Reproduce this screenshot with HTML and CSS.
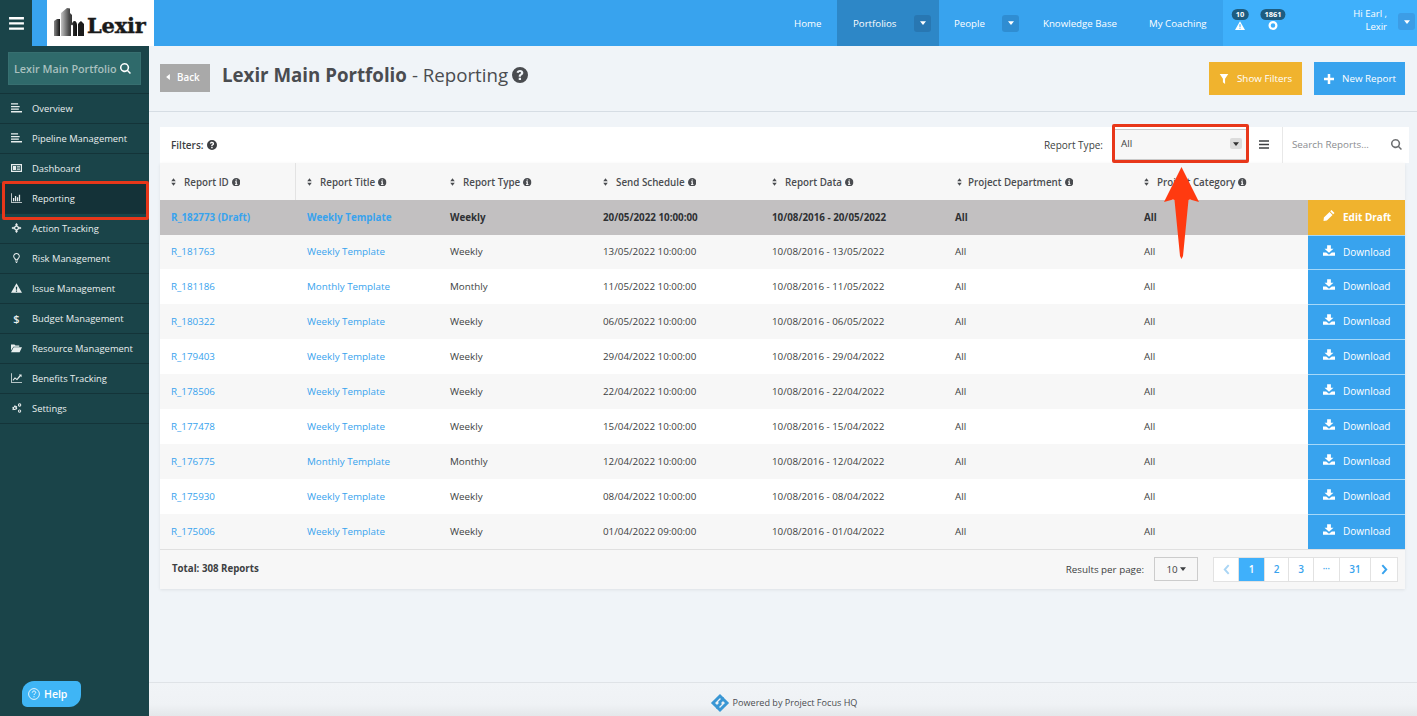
FILE: index.html
```html
<!DOCTYPE html>
<html lang="en">
<head>
<meta charset="utf-8">
<title>Lexir Main Portfolio - Reporting</title>
<link rel="stylesheet" href="styles.css">
</head>
<body>
<svg class="defs" width="0" height="0" aria-hidden="true">
  <symbol id="i-bars" viewBox="0 0 16 14"><path d="M0 0h16v2.600H0zM0 5.600h16v2.600H0zM0 11.200h16v2.600H0z"/></symbol>
  <symbol id="i-list" viewBox="0 0 14 12"><path d="M0 0h9v1.700H0zM0 3.300h11v1.700H0zM0 6.600h10v1.700H0zM0 9.900h14v1.700H0z"/></symbol>
  <symbol id="i-dash" viewBox="0 0 14 12"><path fill-rule="evenodd" d="M0 1h14v10H0zM1.500 2.500v7h11v-7zM2.500 3.500h4v5h-4zM7.500 3.500h4v1h-4zM7.500 5.500h4v1h-4zM7.500 7.500h4v1h-4z"/></symbol>
  <symbol id="i-chart" viewBox="0 0 14 12"><path d="M0 0h1v11h13v1H0zM2.500 6h1.600v4H2.500zM5 3.500h1.600V10H5zM7.500 5h1.600v5H7.500zM10 2h1.600v8H10z"/></symbol>
  <symbol id="i-target" viewBox="0 0 14 14"><path fill-rule="evenodd" d="M7 0l2.200 2.500H8.100v1A3.600 3.600 0 0 1 10.500 5.900h1V4.800L14 7l-2.500 2.200V8.100h-1A3.600 3.600 0 0 1 8.100 10.500v1h1.100L7 14l-2.200-2.500h1.100v-1A3.600 3.600 0 0 1 3.500 8.100h-1v1.100L0 7l2.500-2.200v1.100h1A3.600 3.600 0 0 1 5.900 3.500v-1H4.800zM7 5.300a1.700 1.700 0 1 0 0 3.400 1.700 1.700 0 0 0 0-3.400z"/></symbol>
  <symbol id="i-bulb" viewBox="0 0 10 14"><path fill-rule="evenodd" d="M5 0a4.500 4.500 0 0 1 3 7.900c-.6.600-.8 1.300-.9 2.100H2.900c-.1-.8-.3-1.500-.9-2.100A4.500 4.500 0 0 1 5 0zm0 1.300A3.200 3.200 0 0 0 3 7c.6.600 1 1.100 1.100 1.800h1.800C6 8.100 6.400 7.600 7 7a3.200 3.200 0 0 0-2-5.700zM3 10.800h4v1H3zM3.700 12.500h2.600L5.600 14H4.400z"/></symbol>
  <symbol id="i-warn" viewBox="0 0 16 14"><path fill-rule="evenodd" d="M8 0l8 14H0zM7 5l.2 4.500h1.600L9 5zM7.100 10.500v1.800h1.800v-1.800z"/></symbol>
  <symbol id="i-folder" viewBox="0 0 16 12"><path d="M0 1h5l1.500 1.500H12V4H3.500L0 9.500zM3.900 5H16l-3.500 7H0z"/></symbol>
  <symbol id="i-line" viewBox="0 0 14 12"><path d="M0 0h1v11h13v1H0zM2 8.500l3-3.500 2.500 2L11 2.500 10 1.500h3.500V5l-1.200-1.200L7.700 9 5.200 7l-2.400 2.500z"/></symbol>
  <symbol id="i-cogs" viewBox="0 0 16 14"><path fill-rule="evenodd" d="M5.500 3l1 .2.400 1.300 1.300-.4 1 1.500-.9 1 .9 1-1 1.500-1.300-.4-.4 1.300h-2L4.100 9.700l-1.300.4-1-1.500.9-1-.9-1 1-1.500 1.300.4.400-1.300zm0 2.800a1.300 1.300 0 1 0 0 2.600 1.300 1.300 0 0 0 0-2.600zM12.500 0a2 2 0 1 1 0 5 2 2 0 0 1 0-5zm0 1.500a1 1 0 1 0 0 2 1 1 0 0 0 0-2zM12.500 9a2.300 2.300 0 1 1 0 4.800 2.300 2.300 0 0 1 0-4.800zm0 1.400a1 1 0 1 0 0 2 1 1 0 0 0 0-2z"/></symbol>
  <symbol id="i-search" viewBox="0 0 14 14"><path fill-rule="evenodd" d="M5.800 0a5.800 5.800 0 0 1 4.700 9.200l3.500 3.500-1.400 1.300-3.400-3.500A5.800 5.800 0 1 1 5.800 0zm0 1.900a3.900 3.900 0 1 0 0 7.800 3.900 3.900 0 0 0 0-7.800z"/></symbol>
  <symbol id="i-help" viewBox="0 0 14 14"><path fill-rule="evenodd" d="M7 0a7 7 0 1 1 0 14A7 7 0 0 1 7 0zM7 2.600c-1.700 0-2.800.9-3 2.300l1.800.4c.1-.7.500-1 1.100-1 .6 0 1 .3 1 .8 0 .4-.3.700-.9 1.100-.8.500-1.100 1-1.100 1.800v.5h1.900v-.3c0-.4.200-.6.700-.9.900-.6 1.400-1.200 1.400-2.200 0-1.500-1.200-2.500-2.900-2.500zM5.900 9.500v1.900h2v-1.900z"/></symbol>
  <symbol id="i-info" viewBox="0 0 14 14"><path fill-rule="evenodd" d="M7 0a7 7 0 1 1 0 14A7 7 0 0 1 7 0zM5.900 2.300v2h2.200v-2zM5 5.500v1.400h1v3H5v1.500h4V9.900H8V5.500z"/></symbol>
  <symbol id="i-sort" viewBox="0 0 8 12"><path d="M4 0l3.600 4.800H.4zM4 12L.4 7.200h7.200z"/></symbol>
  <symbol id="i-download" viewBox="0 0 16 14"><path d="M5.500 0h5v4.500H14L8 10 2 4.500h3.500zM0 9.500h4.300L8 12.500l3.700-3H16V14H0z"/></symbol>
  <symbol id="i-pencil" viewBox="0 0 14 14"><path d="M10.200 0L14 3.800l-1.700 1.700-3.800-3.800zM7.700 2.500l3.800 3.800-7.200 7.200L0 14l.5-4.300z"/></symbol>
  <symbol id="i-filter" viewBox="0 0 12 14"><path d="M0 0h12L7.500 6.500V14l-3-2.500v-5z"/></symbol>
  <symbol id="i-plus" viewBox="0 0 12 12"><path d="M4.500 0h3v4.500H12v3H7.500V12h-3V7.500H0v-3h4.500z"/></symbol>
  <symbol id="i-caret" viewBox="0 0 8 5"><path d="M0 0h8L4 5z"/></symbol>
  <symbol id="i-left" viewBox="0 0 5 8"><path d="M5 0v8L0 4z"/></symbol>
  <symbol id="i-circle" viewBox="0 0 14 14"><path fill-rule="evenodd" d="M7 0a7 7 0 1 1 0 14A7 7 0 0 1 7 0zm0 3.500a3.500 3.500 0 1 0 0 7 3.500 3.500 0 0 0 0-7z"/></symbol>
  <symbol id="i-qmark" viewBox="0 0 14 14"><circle cx="7" cy="7" r="6.300" fill="none" stroke="currentColor" stroke-width="1"/><path d="M5 5.400c.1-1.200.9-1.900 2-1.900s2 .7 2 1.700c0 1.500-2 1.500-2 3" fill="none" stroke="currentColor" stroke-width="1.100"/><path d="M6.400 9.500h1.200v1.300H6.400z" fill="currentColor"/></symbol>
</svg>

<header class="topbar">
  <button class="menu-toggle" type="button" aria-label="Menu"><svg class="ic-burger"><use href="#i-bars"/></svg></button>
  <div class="logo">
    <svg class="logo-mark" viewBox="0 0 30 28" aria-hidden="true">
      <defs>
        <linearGradient id="tower" x1="0" x2="1" y1="0" y2="0"><stop offset="0" stop-color="#c4c4c4"/><stop offset=".5" stop-color="#4a4a4a"/><stop offset="1" stop-color="#0e0e0e"/></linearGradient>
        <linearGradient id="wing" x1="0" x2="1" y1="0" y2="0"><stop offset="0" stop-color="#8a8a8a"/><stop offset="1" stop-color="#141414"/></linearGradient>
      </defs>
      <path fill="url(#wing)" d="M0 13l3-2h3v17H0z"/>
      <path fill="url(#tower)" d="M7 5l6-5 3 .5V5l2 2v9c0-1 1-3 2.500-3S23 15 23 17v11h-4V18c0-1-1-1.500-1.500-1s-.5.500-.5 1v10H7z"/>
      <path fill="#1c1c1c" d="M24 28V16c1-1.500 2-2.500 3-3l3 3v12z"/>
    </svg>
    <span class="logo-word">Lexir</span>
  </div>
  <nav class="mainnav">
    <a class="navitem navitem-home">Home</a>
    <a class="navitem navitem-active">Portfolios<span class="navcaret navcaret-dark"><svg class="ic-caret"><use href="#i-caret"/></svg></span></a>
    <a class="navitem navitem-people">People<span class="navcaret"><svg class="ic-caret"><use href="#i-caret"/></svg></span></a>
    <a class="navitem navitem-kb">Knowledge Base</a>
    <a class="navitem navitem-coach">My Coaching</a>
  </nav>
  <div class="userarea">
    <div class="alert"><svg class="ic-alert"><use href="#i-warn"/></svg><span class="badge">10</span></div>
    <div class="alert alert-second"><svg class="ic-alert"><use href="#i-circle"/></svg><span class="badge">1861</span></div>
    <div class="username">Hi Earl ,<br>Lexir</div>
    <span class="navcaret usercaret"><svg class="ic-caret"><use href="#i-caret"/></svg></span>
  </div>
</header>

<div class="layout">
  <aside class="sidebar">
    <div class="sidesearch-wrap">
      <div class="sidesearch"><span>Lexir Main Portfolio</span><svg class="ic-sidesearch"><use href="#i-search"/></svg></div>
    </div>
    <ul class="sidemenu">
      <li class="sideitem"><svg class="ic-side"><use href="#i-list"/></svg>Overview</li>
      <li class="sideitem"><svg class="ic-side"><use href="#i-list"/></svg>Pipeline Management</li>
      <li class="sideitem"><svg class="ic-side"><use href="#i-dash"/></svg>Dashboard</li>
      <li class="sideitem sideitem-active"><svg class="ic-side"><use href="#i-chart"/></svg>Reporting</li>
      <li class="sideitem"><svg class="ic-side"><use href="#i-target"/></svg>Action Tracking</li>
      <li class="sideitem"><svg class="ic-side"><use href="#i-bulb"/></svg>Risk Management</li>
      <li class="sideitem"><svg class="ic-side"><use href="#i-warn"/></svg>Issue Management</li>
      <li class="sideitem"><span class="ic-dollar">$</span>Budget Management</li>
      <li class="sideitem"><svg class="ic-side"><use href="#i-folder"/></svg>Resource Management</li>
      <li class="sideitem"><svg class="ic-side"><use href="#i-line"/></svg>Benefits Tracking</li>
      <li class="sideitem"><svg class="ic-side"><use href="#i-cogs"/></svg>Settings</li>
    </ul>
  </aside>

  <main class="content">
    <div class="pagehead">
      <a class="backbtn"><svg class="ic-left"><use href="#i-left"/></svg>Back</a>
      <h1 class="pagetitle"><b>Lexir Main Portfolio</b> - Reporting<svg class="ic-title"><use href="#i-help"/></svg></h1>
      <div class="pageactions">
        <a class="actbtn actbtn-yellow"><svg class="ic-act"><use href="#i-filter"/></svg>Show Filters</a>
        <a class="actbtn actbtn-blue"><svg class="ic-act"><use href="#i-plus"/></svg>New Report</a>
      </div>
    </div>

    <section class="panel">
      <div class="filterbar">
        <span class="filterlabel">Filters:<svg class="ic-filterhelp"><use href="#i-help"/></svg></span>
        <span class="typelabel">Report Type:</span>
        <div class="typeselect"><span>All</span><span class="selectcaret"><svg class="ic-caret"><use href="#i-caret"/></svg></span></div>
        <svg class="ic-listview"><use href="#i-bars"/></svg>
        <div class="searchbox"><span>Search Reports...</span><svg class="ic-search"><use href="#i-search"/></svg></div>
      </div>

      <div class="table">
        <div class="row row-head">
          <div class="cell hcell hcell-first"><svg class="ic-sort"><use href="#i-sort"/></svg>Report ID<svg class="ic-info"><use href="#i-info"/></svg></div>
          <div class="cell hcell"><svg class="ic-sort"><use href="#i-sort"/></svg>Report Title<svg class="ic-info"><use href="#i-info"/></svg></div>
          <div class="cell hcell"><svg class="ic-sort"><use href="#i-sort"/></svg>Report Type<svg class="ic-info"><use href="#i-info"/></svg></div>
          <div class="cell hcell"><svg class="ic-sort"><use href="#i-sort"/></svg>Send Schedule<svg class="ic-info"><use href="#i-info"/></svg></div>
          <div class="cell hcell"><svg class="ic-sort"><use href="#i-sort"/></svg>Report Data<svg class="ic-info"><use href="#i-info"/></svg></div>
          <div class="cell hcell hcell-dept"><svg class="ic-sort"><use href="#i-sort"/></svg>Project Department<svg class="ic-info"><use href="#i-info"/></svg></div>
          <div class="cell hcell"><svg class="ic-sort"><use href="#i-sort"/></svg>Project Category<svg class="ic-info"><use href="#i-info"/></svg></div>
          <div class="cell hcell"></div>
        </div>

        <div class="row row-draft">
          <div class="cell"><a class="link">R_182773 (Draft)</a></div>
          <div class="cell"><a class="link">Weekly Template</a></div>
          <div class="cell">Weekly</div>
          <div class="cell">20/05/2022 10:00:00</div>
          <div class="cell">10/08/2016 - 20/05/2022</div>
          <div class="cell">All</div>
          <div class="cell">All</div>
          <a class="rowbtn rowbtn-edit"><svg class="ic-rowbtn"><use href="#i-pencil"/></svg>Edit Draft</a>
        </div>

        <div class="row row-short">
          <div class="cell"><a class="link">R_181763</a></div>
          <div class="cell"><a class="link">Weekly Template</a></div>
          <div class="cell">Weekly</div>
          <div class="cell">13/05/2022 10:00:00</div>
          <div class="cell">10/08/2016 - 13/05/2022</div>
          <div class="cell">All</div>
          <div class="cell">All</div>
          <a class="rowbtn"><svg class="ic-rowbtn"><use href="#i-download"/></svg>Download</a>
        </div>
        <div class="row">
          <div class="cell"><a class="link">R_181186</a></div>
          <div class="cell"><a class="link">Monthly Template</a></div>
          <div class="cell">Monthly</div>
          <div class="cell">11/05/2022 10:00:00</div>
          <div class="cell">10/08/2016 - 11/05/2022</div>
          <div class="cell">All</div>
          <div class="cell">All</div>
          <a class="rowbtn"><svg class="ic-rowbtn"><use href="#i-download"/></svg>Download</a>
        </div>
        <div class="row">
          <div class="cell"><a class="link">R_180322</a></div>
          <div class="cell"><a class="link">Weekly Template</a></div>
          <div class="cell">Weekly</div>
          <div class="cell">06/05/2022 10:00:00</div>
          <div class="cell">10/08/2016 - 06/05/2022</div>
          <div class="cell">All</div>
          <div class="cell">All</div>
          <a class="rowbtn"><svg class="ic-rowbtn"><use href="#i-download"/></svg>Download</a>
        </div>
        <div class="row">
          <div class="cell"><a class="link">R_179403</a></div>
          <div class="cell"><a class="link">Weekly Template</a></div>
          <div class="cell">Weekly</div>
          <div class="cell">29/04/2022 10:00:00</div>
          <div class="cell">10/08/2016 - 29/04/2022</div>
          <div class="cell">All</div>
          <div class="cell">All</div>
          <a class="rowbtn"><svg class="ic-rowbtn"><use href="#i-download"/></svg>Download</a>
        </div>
        <div class="row">
          <div class="cell"><a class="link">R_178506</a></div>
          <div class="cell"><a class="link">Weekly Template</a></div>
          <div class="cell">Weekly</div>
          <div class="cell">22/04/2022 10:00:00</div>
          <div class="cell">10/08/2016 - 22/04/2022</div>
          <div class="cell">All</div>
          <div class="cell">All</div>
          <a class="rowbtn"><svg class="ic-rowbtn"><use href="#i-download"/></svg>Download</a>
        </div>
        <div class="row">
          <div class="cell"><a class="link">R_177478</a></div>
          <div class="cell"><a class="link">Weekly Template</a></div>
          <div class="cell">Weekly</div>
          <div class="cell">15/04/2022 10:00:00</div>
          <div class="cell">10/08/2016 - 15/04/2022</div>
          <div class="cell">All</div>
          <div class="cell">All</div>
          <a class="rowbtn"><svg class="ic-rowbtn"><use href="#i-download"/></svg>Download</a>
        </div>
        <div class="row">
          <div class="cell"><a class="link">R_176775</a></div>
          <div class="cell"><a class="link">Monthly Template</a></div>
          <div class="cell">Monthly</div>
          <div class="cell">12/04/2022 10:00:00</div>
          <div class="cell">10/08/2016 - 12/04/2022</div>
          <div class="cell">All</div>
          <div class="cell">All</div>
          <a class="rowbtn"><svg class="ic-rowbtn"><use href="#i-download"/></svg>Download</a>
        </div>
        <div class="row">
          <div class="cell"><a class="link">R_175930</a></div>
          <div class="cell"><a class="link">Weekly Template</a></div>
          <div class="cell">Weekly</div>
          <div class="cell">08/04/2022 10:00:00</div>
          <div class="cell">10/08/2016 - 08/04/2022</div>
          <div class="cell">All</div>
          <div class="cell">All</div>
          <a class="rowbtn"><svg class="ic-rowbtn"><use href="#i-download"/></svg>Download</a>
        </div>
        <div class="row">
          <div class="cell"><a class="link">R_175006</a></div>
          <div class="cell"><a class="link">Weekly Template</a></div>
          <div class="cell">Weekly</div>
          <div class="cell">01/04/2022 09:00:00</div>
          <div class="cell">10/08/2016 - 01/04/2022</div>
          <div class="cell">All</div>
          <div class="cell">All</div>
          <a class="rowbtn"><svg class="ic-rowbtn"><use href="#i-download"/></svg>Download</a>
        </div>

        <div class="tablefoot">
          <span class="total">Total: 308 Reports</span>
          <span class="perpage">Results per page:</span>
          <div class="perselect">10<svg class="ic-caret"><use href="#i-caret"/></svg></div>
          <div class="pager">
            <a class="pg pg-prev"><svg class="ic-chev" viewBox="0 0 8 12"><path d="M6.500 1L2 6l4.500 5" fill="none" stroke="currentColor" stroke-width="2.200"/></svg></a>
            <a class="pg pg-current">1</a>
            <a class="pg pg-2">2</a>
            <a class="pg pg-3">3</a>
            <a class="pg pg-dots">&bull;&bull;&bull;</a>
            <a class="pg pg-31">31</a>
            <a class="pg pg-next"><svg class="ic-chev" viewBox="0 0 8 12"><path d="M1.500 1L6 6l-4.500 5" fill="none" stroke="currentColor" stroke-width="2.200"/></svg></a>
          </div>
        </div>
      </div>
    </section>

    <footer class="pagefoot">
      <svg class="foot-logo" viewBox="0 0 20 20" aria-hidden="true"><path class="foot-a" d="M13 6L10 3 3 10l4 4 4-4"/><path class="foot-b" d="M7 14l3 3 7-7-4-4-4 4"/></svg>
      <span>Powered by Project Focus HQ</span>
    </footer>
  </main>
</div>

<a class="helpbtn"><svg class="ic-qmark"><use href="#i-qmark"/></svg>Help</a>

<div class="mark mark-reporting"></div>
<div class="mark mark-type"></div>
<svg class="arrow" viewBox="0 0 38 92" aria-hidden="true"><path d="M18.500 0L36 35l-9-2.500-1.500.5-5.500 56-1.500 3-1.500-3-5.500-56-1.500-.5-9 2.500z"/></svg>
</body>
</html>
```
FILE: styles.css
```css
* { box-sizing: border-box; }
html, body { height: 100%; }
body {
  margin: 0;
  height: 716px;
  overflow: hidden;
  display: flex;
  flex-direction: column;
  font-family: "Open Sans", "Noto Sans", sans-serif;
  font-size: 9.800px;
  color: #3d3f42;
  background: #f0f4f8;
  position: relative;
}
a { color: inherit; text-decoration: none; }
svg { fill: currentColor; display: block; flex: none; }
.defs { position: absolute; }

/* top bar */
.topbar { flex: none; height: 46px; display: flex; background: #38a3ee; color: #fff; }
.menu-toggle { width: 32px; height: 46px; padding: 0; border: 0; background: #1a4449; color: #fff; display: flex; align-items: center; justify-content: center; }
.ic-burger { width: 15px; height: 13px; }
.logo { width: 107px; margin-left: 15px; background: #fff; display: flex; align-items: flex-start; padding: 8px 0 0 7px; color: #1a1a1a; }
.logo-mark { width: 30px; height: 28px; }
.logo-word { font-family: "DejaVu Serif", serif; font-weight: 700; font-size: 21px; line-height: 24px; letter-spacing: -.2px; margin: 6px 0 0 3px; -webkit-text-stroke: .4px #1a1a1a; }
.mainnav { margin-left: auto; display: flex; align-items: stretch; }
.navitem { display: flex; align-items: center; font-size: 9.700px; white-space: nowrap; }
.navitem-home { width: 57px; padding-left: 14px; }
.navitem-active { width: 102px; padding: 0 8px 0 16px; background: #2d87c7; }
.navitem-people { width: 88px; padding: 0 8px 0 15px; }
.navitem-kb { width: 106px; padding-left: 16px; }
.navitem-coach { width: 90px; padding-left: 16px; }
.navcaret { width: 17px; height: 17px; margin-left: auto; border-radius: 3px; background: #2f8dd2; display: flex; align-items: center; justify-content: center; }
.navcaret-dark { background: #2877b2; }
.ic-caret { width: 6px; height: 4px; }
.userarea { width: 194px; background: #3fb0fb; display: flex; align-items: center; position: relative; }
.alert { position: relative; margin-left: 12px; width: 10px; height: 10px; }
.alert-second { margin-left: 23px; }
.ic-alert { width: 10px; height: 9px; margin-top: 3px; }
.badge { position: absolute; left: 50%; top: -9px; transform: translateX(-50%); height: 11px; line-height: 11px; padding: 0 4px; border-radius: 6px; background: #1d5c80; color: #fff; font-size: 7.500px; font-weight: 700; }
.username { margin-left: auto; text-align: right; font-size: 9.500px; line-height: 13px; margin-top: -7px; margin-right: 11px; white-space: nowrap; }
.usercaret { margin: -3px 2px 0 0; flex: none; background: #3c9de6; }

/* shell */
.layout { flex: 1; display: flex; min-height: 0; }
.sidebar { width: 149px; flex: none; background: #1a4449; color: #e8eeee; }
.sidesearch-wrap { height: 48px; padding: 6px 8px 0; border-bottom: 1px solid #143439; }
.sidesearch { height: 33px; background: #2f6a6b; border: 1px solid #376f70; display: flex; align-items: center; padding-left: 5px; color: #a9c0bf; font-weight: 600; font-size: 10.800px; white-space: nowrap; }
.ic-sidesearch { width: 11px; height: 11px; margin-left: 3px; color: #fff; }
.sidemenu { list-style: none; margin: 0; padding: 0; }
.sideitem { height: 30px; display: flex; align-items: center; padding: 0 0 1px 11px; border-bottom: 1px solid #143439; font-size: 9.400px; white-space: nowrap; }
.sideitem-active { background: #143238; }
.ic-side { width: 11px; height: 10px; margin-right: 10px; }
.ic-dollar { width: 11px; margin-right: 10px; text-align: center; font-size: 11px; font-weight: 600; }

.content { flex: 1; min-width: 0; display: flex; flex-direction: column; }
.pagehead { flex: none; height: 66px; border-bottom: 1px solid #d6dde4; display: flex; align-items: flex-start; padding: 18px 12px 0 11px; }
.backbtn { width: 50px; height: 28px; background: #a9a9a9; color: #fff; display: flex; align-items: center; padding: 0 0 2px 6px; font-size: 9.800px; font-weight: 600; }
.ic-left { width: 4px; height: 6px; margin-right: 7px; }
.pagetitle { margin: -3px 0 0 12px; font-size: 18.700px; line-height: 27px; font-weight: 400; color: #4a4c50; white-space: nowrap; display: flex; align-items: center; }
.pagetitle b { font-weight: 700; margin-right: 5px; }
.ic-title { width: 16px; height: 16px; margin-left: 4px; }
.pageactions { margin-left: auto; margin-top: -2px; display: flex; gap: 12px; }
.actbtn { height: 33px; display: flex; align-items: center; color: #fff; font-size: 9.800px; white-space: nowrap; }
.actbtn-yellow { width: 93px; padding-left: 10px; background: #f0b32e; }
.actbtn-blue { width: 91px; padding-left: 10px; background: #38a3ee; }
.ic-act { width: 10px; height: 10px; margin-right: 8px; }

.panel { flex: none; margin: 15px 8px 0 11px; }
.filterbar { height: 36px; background: #fff; display: flex; align-items: center; padding-left: 11px; }
.filterlabel { display: flex; align-items: center; font-weight: 600; font-size: 10px; }
.ic-filterhelp { width: 10px; height: 10px; margin-left: 3px; }
.typelabel { margin-left: auto; margin-right: 11px; font-size: 10px; }
.typeselect { width: 133px; height: 31px; margin-top: -1px; background: #f7f7f7; border-top: 1px solid #c9c9c9; border-bottom: 1px solid #c9c9c9; display: flex; align-items: center; justify-content: space-between; padding: 0 5px 2px 7px; }
.selectcaret { width: 12px; height: 11px; background: #dcdcdc; border-radius: 2px; display: flex; align-items: center; justify-content: center; color: #333; }
.ic-listview { width: 10px; height: 9px; margin: -2px 13px 0 12px; color: #3d3f42; }
.searchbox { width: 127px; height: 36px; border-left: 1px solid #e8e8e8; display: flex; align-items: center; justify-content: space-between; padding: 0 7px 1px 9px; color: #8b8d90; font-size: 9.800px; }
.ic-search { width: 11px; height: 11px; color: #6c6e70; }

.table { width: 1245px; box-shadow: 0 1px 3px rgba(0, 0, 0, .08); }
.row { display: grid; grid-template-columns: 136px 143px 153px 169px 183px 189px 175px 97px; height: 35px; align-items: center; background: #fff; }
.row:nth-child(odd) { background: #f7f7f7; }
.row-short { height: 34px; }
.row-head { height: 37px; }
.row.row-head { background: #f7f7f7; }
.row.row-draft { background: #c2c0c1; font-weight: 700; color: #2e3033; }
.cell { padding: 0 0 1px 11px; white-space: nowrap; font-size: 9.800px; }
.hcell { height: 100%; padding: 1px 0 0 11px; display: flex; align-items: center; font-weight: 600; color: #4a4c50; }
.hcell-first { border-right: 1px solid #e3e3e3; }
.hcell-dept { padding-left: 13px; }
.ic-sort { width: 5px; height: 8px; margin-right: 8px; }
.ic-info { width: 8.500px; height: 8.500px; margin-left: 3px; }
.hcell-dept .ic-sort { margin-right: 6px; }
.link { color: #38a3ee; }
.rowbtn { align-self: stretch; background: #38a3ee; border-top: 1px solid #a6d8f8; display: flex; align-items: center; padding: 0 0 2px 15px; color: #fff; font-size: 10px; white-space: nowrap; }
.row .rowbtn-edit { background: #f0b32e; border-top: 0; font-weight: 700; }
.ic-rowbtn { width: 12px; height: 11px; margin-right: 8px; margin-top: -3px; }

.tablefoot { height: 40px; background: #f7f7f7; border-top: 1px solid #e0e0e0; display: flex; align-items: center; padding: 0 7px 1px 12px; }
.total { font-weight: 700; font-size: 9.700px; margin-top: -1px; }
.perpage { margin-left: auto; margin-right: 10px; font-size: 9.800px; }
.perselect { width: 44px; height: 24px; border: 1px solid #ccc; display: flex; align-items: center; justify-content: center; gap: 2px; font-size: 9.800px; margin-right: 15px; }
.pager { display: flex; height: 25px; background: #fff; border: 1px solid #e2e2e2; }
.pg { display: flex; align-items: center; justify-content: center; border-right: 1px solid #e2e2e2; color: #38a3ee; font-size: 10px; font-weight: 600; }
.pg-prev { width: 25px; color: #a9d5f5; }
.pg-current { width: 26px; background: #3fb0fb; color: #fff; }
.pg-2 { width: 24px; }
.pg-3 { width: 25px; }
.pg-dots { width: 26px; font-size: 5px; letter-spacing: .5px; }
.pg-31 { width: 31px; }
.pg-next { width: 26px; border-right: 0; }
.ic-chev { width: 7px; height: 11px; }

.pagefoot { margin-top: auto; flex: none; height: 34px; border-top: 1px solid #dfe3e7; background: linear-gradient(180deg, #f1f4f7 0%, #eff2f5 65%, #e4e7ea 100%); display: flex; align-items: center; justify-content: center; gap: 3px; font-size: 9.100px; color: #4a4c50; padding: 6px 0 0 1px; }
.foot-logo { width: 20px; height: 20px; }
.foot-a, .foot-b { fill: none; stroke: #3a97d4; stroke-width: 3; }

/* floating help button */
.helpbtn { position: absolute; left: 22px; top: 681px; width: 59px; height: 26px; border-radius: 12px 5px 12px 5px; background: #3fb5f5; color: #fff; font-size: 10.500px; font-weight: 600; display: flex; align-items: center; padding-left: 6px; }
.ic-qmark { width: 12px; height: 12px; margin-right: 4px; }

/* annotations drawn over the screenshot */
.mark { position: absolute; border: 3px solid #e8371a; border-radius: 2px; }
.mark-reporting { left: 2px; top: 181px; width: 147px; height: 39px; }
.mark-type { left: 1112px; top: 124px; width: 137px; height: 39px; }
.arrow { position: absolute; left: 1163px; top: 167px; width: 38px; height: 92px; fill: #ff3a10; }
```
